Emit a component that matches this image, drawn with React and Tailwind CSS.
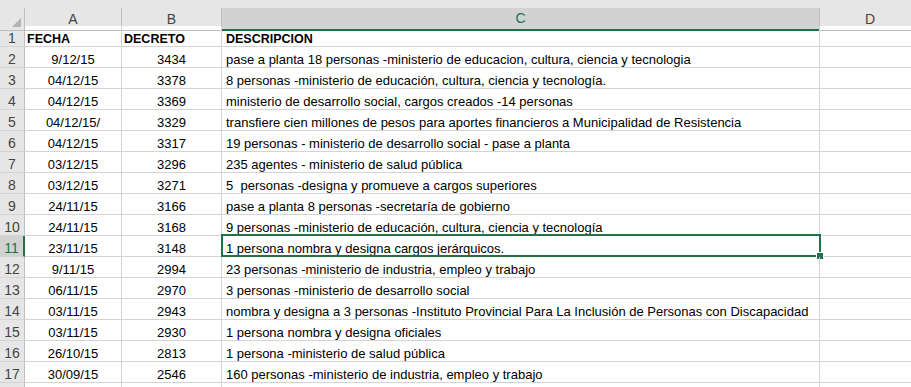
const rows = [
  ["FECHA", "DECRETO", "DESCRIPCION"],
  ["9/12/15", "3434", "pase a planta 18 personas -ministerio de educacion, cultura, ciencia y tecnologia"],
  ["04/12/15", "3378", "8 personas -ministerio de educación, cultura, ciencia y tecnología."],
  ["04/12/15", "3369", "ministerio de desarrollo social, cargos creados -14 personas"],
  ["04/12/15/", "3329", "transfiere cien millones de pesos para aportes financieros a Municipalidad de Resistencia"],
  ["04/12/15", "3317", "19 personas - ministerio de desarrollo social - pase a planta"],
  ["03/12/15", "3296", "235 agentes - ministerio de salud pública"],
  ["03/12/15", "3271", "5  personas -designa y promueve a cargos superiores"],
  ["24/11/15", "3166", "pase a planta 8 personas -secretaría de gobierno"],
  ["24/11/15", "3168", "9 personas -ministerio de educación, cultura, ciencia y tecnología"],
  ["23/11/15", "3148", "1 persona nombra y designa cargos jerárquicos."],
  ["9/11/15", "2994", "23 personas -ministerio de industria, empleo y trabajo"],
  ["06/11/15", "2970", "3 personas -ministerio de desarrollo social"],
  ["03/11/15", "2943", "nombra y designa a 3 personas -Instituto Provincial Para La Inclusión de Personas con Discapacidad"],
  ["03/11/15", "2930", "1 persona nombra y designa oficiales"],
  ["26/10/15", "2813", "1 persona -ministerio de salud pública"],
  ["30/09/15", "2546", "160 personas -ministerio de industria, empleo y trabajo"],
  ["", "", ""],
];

const cols = "grid grid-cols-[25px_97px_100px_598px_1fr]";

function RowHeader({ n, active, label }) {
  return (
    <div
      className={
        "h-[21px] flex items-center justify-center pt-[5px] border-b border-[#d4d4d4] text-[14px] " +
        (active
          ? "bg-[#d2d2d2] border-r-2 border-r-[#217346] text-[#217346]"
          : "bg-[#e6e6e6] border-r border-r-[#bfbfbf] text-[#444]")
      }
    >
      {label ? n : ""}
    </div>
  );
}

export default function App() {
  return (
    <div className="w-[911px] h-[387px] overflow-hidden bg-white font-['Liberation_Sans',Arial,sans-serif] text-[13px] text-black">
      {/* top strip */}
      <div className="h-[8px] bg-[#e6e6e6]" />

      {/* column headers */}
      <div className={cols + " h-[18px] bg-[#e6e6e6] text-[14px] text-[#444]"}>
        <div className="relative border-r border-b border-[#bfbfbf]">
          <div className="absolute right-[3px] bottom-[3px] w-0 h-0 border-l-[9px] border-l-transparent border-b-[9px] border-b-[#b4b4b4]" />
        </div>
        <div className="flex items-center justify-center border-r border-b border-[#bfbfbf]">A</div>
        <div className="flex items-center justify-center border-r border-b border-[#bfbfbf]">B</div>
        <div className="flex items-center justify-center bg-[#d2d2d2] border-r border-[#bfbfbf] border-b-2 border-b-[#217346] text-[#217346]">
          C
        </div>
        <div className="flex items-center border-b border-[#bfbfbf]">
          <span className="w-[100px] text-center">D</span>
        </div>
      </div>

      {rows.map((r, i) => {
        const n = i + 1;
        const active = n === 11;
        const bold = n === 1;
        return (
          <div key={n} className={cols}>
            <RowHeader n={n} active={active} label={n < 18} />
            <div
              className={
                "h-[21px] flex items-center pt-[6px] border-r border-b border-[#d4d4d4] whitespace-pre " +
                (bold ? "font-bold text-[12.5px] pl-[2px]" : "justify-center")
              }
            >
              {r[0]}
            </div>
            <div
              className={
                "h-[21px] flex items-center pt-[6px] border-r border-b border-[#d4d4d4] whitespace-pre " +
                (bold ? "font-bold text-[12.5px] pl-[2px]" : "justify-center")
              }
            >
              {r[1]}
            </div>
            <div
              className={
                "relative h-[21px] flex items-center pt-[6px] pl-[4px] border-r border-b border-[#d4d4d4] whitespace-pre " +
                (bold ? "font-bold text-[12.5px]" : "")
              }
            >
              {r[2]}
              {active && (
                <div className="absolute -top-[2px] -left-[1px] -right-[2px] -bottom-[1px] border-2 border-[#217346]">
                  <div className="absolute -right-[5px] -bottom-[5px] w-[8px] h-[8px] bg-[#217346] border border-white" />
                </div>
              )}
            </div>
            <div className="h-[21px] border-b border-[#d4d4d4]" />
          </div>
        );
      })}
    </div>
  );
}
